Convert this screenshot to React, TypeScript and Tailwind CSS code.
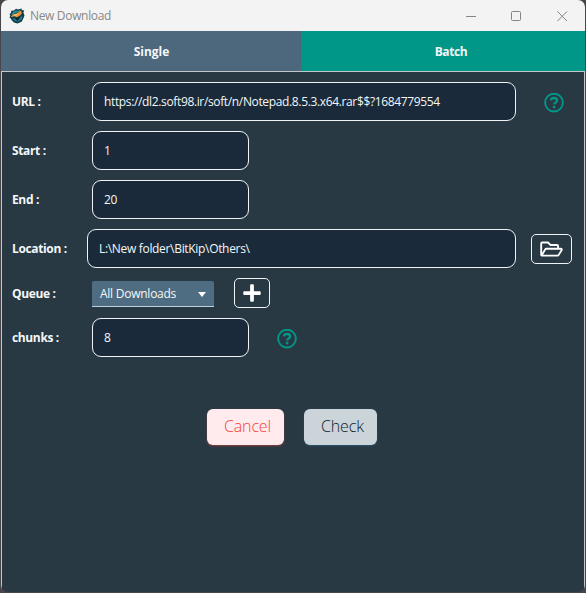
import type { ReactNode } from 'react';
import { FaPlus, FaRegFolderOpen } from 'react-icons/fa';

function Label({ children }: { children: ReactNode }) {
  return (
    <span className="shrink-0 whitespace-nowrap text-[12px] leading-4 font-bold tracking-[-0.36px] text-[#f4f7f8]">
      {children}
    </span>
  );
}

function Field({ value, width, spacing = '' }: { value: string; width: string; spacing?: string }) {
  return (
    <div
      className={`flex h-[39px] shrink-0 items-center rounded-[9px] border border-[#f0f3f5] bg-[#1a2a3a] pl-[11px] whitespace-nowrap text-[12px] text-[#f4f7f8] ${width} ${spacing}`}
    >
      {value}
    </div>
  );
}

function HelpIcon() {
  return (
    <svg viewBox="0 0 20 20" className="mt-[2px] ml-7 h-5 w-5" fill="none" stroke="#009688">
      <circle cx="10" cy="9.6" r="8.9" strokeWidth="1.9" />
      <path d="M6.9 7.4C7.1 5.7 8.3 5 10 5c1.9 0 3.1.9 3.1 2.4 0 2.1-2.9 2.1-2.9 4.1" strokeWidth="2.3" />
      <circle cx="10.1" cy="14.1" r="1.4" fill="#009688" stroke="none" />
    </svg>
  );
}

function AppLogo() {
  return (
    <svg viewBox="0 0 16 16" className="h-4 w-4">
      <path d="M.5 6 2 5 2.3 2.8 5 2.6 7 .7 9 1.4 12.6.5 12.8 2 15.2 2.4 14.4 4.5 15.5 7.5 14.2 10.8 12.5 13.8 8.5 15.6 5 14.4 3 12.6 1.6 10.3.4 9.4 1.4 7.8Z" fill="#123a46" />
      <path d="M2 6.5 4.5 3.6 8 1.9 7.8 3.3 12 1.4 10.4 4 6.5 5 3.6 7.3Z" fill="#2a8796" />
      <path d="M1.6 9.3 4 6.5 7.5 5.4 12.6 2.2 11.8 4.6 13.6 4 11.4 7.3 8 9.2 5.4 8.3Z" fill="#e8963a" />
      <path d="M3.8 7.5 7 6 9 6.5 6.4 7.8Z" fill="#ffc878" />
      <path d="M3.5 10.2 6 10.6 8 11.8 11 9.8 13.6 7 12.8 11 9.3 13.8 5.5 12.7Z" fill="#1d7f94" />
      <path d="M5.8 10.2 8.3 10.8 11 8.8 8.8 13Z" fill="#0a171c" />
    </svg>
  );
}

function TitleBar() {
  return (
    <div className="flex h-[31px] shrink-0 items-center bg-[#f3f3f3] pl-2">
      <AppLogo />
      <span className="ml-[5px] text-[12px] leading-4 tracking-[-0.33px] text-[#888]">New Download</span>
      <svg viewBox="0 0 102 10" className="mr-[17px] ml-auto h-[10px] w-[102px]" fill="none" stroke="#858585">
        <path d="M0 5.5H10" />
        <rect x="45.5" y=".5" width="9" height="9" rx="1" />
        <path d="M91.5.5 101 10M101 .5 91.5 10" />
      </svg>
    </div>
  );
}

export default function App() {
  return (
    <div className="h-[593px] w-[586px] overflow-hidden bg-[#48464a] px-px pb-px font-['Open_Sans','Noto_Sans',sans-serif]">
      <div className="flex h-[592px] flex-col overflow-hidden rounded-[7px] bg-[#293944]">
        <TitleBar />
        <div className="flex h-10 shrink-0 text-[12px] font-bold text-[#f4f7f8]">
          <div className="flex w-[300px] items-center justify-center bg-[#4d687c] pt-px pl-px">Single</div>
          <div className="flex flex-1 items-center justify-center bg-[#009688] pt-px pl-4 tracking-[-0.4px]">Batch</div>
        </div>
        <div className="flex flex-1 flex-col border-x border-t border-[#c3c7ca] pt-[10px] pl-[10px]">
          <div className="flex h-[39px] items-center">
            <div className="flex w-20"><Label>URL :</Label></div>
            <Field value="https://dl2.soft98.ir/soft/n/Notepad.8.5.3.x64.rar$$?1684779554" width="w-[424px]" spacing="tracking-[-0.355px]" />
            <HelpIcon />
          </div>
          <div className="mt-[10px] flex h-[39px] items-center">
            <div className="flex w-20"><Label>Start :</Label></div>
            <Field value="1" width="w-[157px]" />
          </div>
          <div className="mt-[10px] flex h-[39px] items-center">
            <div className="flex w-20"><Label>End :</Label></div>
            <Field value="20" width="w-[157px]" spacing="tracking-[-0.3px]" />
          </div>
          <div className="mt-[10px] flex h-[39px] items-center">
            <div className="flex w-[75px]"><Label>Location :</Label></div>
            <Field value="L:\New folder\BitKip\Others\" width="w-[429px]" spacing="tracking-[-0.32px]" />
            <button className="mt-px ml-[15px] flex h-[30px] w-[41px] items-center justify-center rounded-[5px] border border-[#f0f3f5]">
              <FaRegFolderOpen className="h-5 w-[23px] text-white" />
            </button>
          </div>
          <div className="mt-[10px] flex h-[30px] items-center">
            <div className="flex w-20 pt-[2px]"><Label>Queue :</Label></div>
            <div className="mt-[2px] flex h-[26px] w-[122px] items-center rounded-t-[2px] border-b border-[#c3cfd6] bg-[#4f6d82] pl-2 text-[12px] tracking-[-0.25px] whitespace-nowrap text-[#f4f7f8]">
              All Downloads
              <svg viewBox="0 0 8 5" className="mt-px mr-2 ml-auto h-[5px] w-2">
                <path d="M0 0H8L4 5Z" fill="#fff" />
              </svg>
            </div>
            <button className="ml-5 flex h-[30px] w-9 items-center justify-center rounded-[5px] border border-[#f0f3f5]">
              <FaPlus className="h-5 w-5 text-white" />
            </button>
          </div>
          <div className="mt-[10px] flex h-[39px] items-center">
            <div className="flex w-20"><Label>chunks :</Label></div>
            <Field value="8" width="w-[157px]" />
            <HelpIcon />
          </div>
          <div className="mt-[52px] flex pl-[195px] text-[16px] font-[350] tracking-[-0.15px]">
            <button className="flex h-9 w-[77px] items-center rounded-[6px] bg-[#ffebee] pb-[2px] pl-[17px] text-[#f44336] shadow-[0_1px_2px_#f4433680]">Cancel</button>
            <button className="ml-5 flex h-9 w-[73px] items-center rounded-[6px] bg-[#cad4d9] pb-[2px] pl-[17px] text-[#0c1c2b] shadow-[0_1px_2px_#2b668a90]">Check</button>
          </div>
        </div>
      </div>
    </div>
  );
}
